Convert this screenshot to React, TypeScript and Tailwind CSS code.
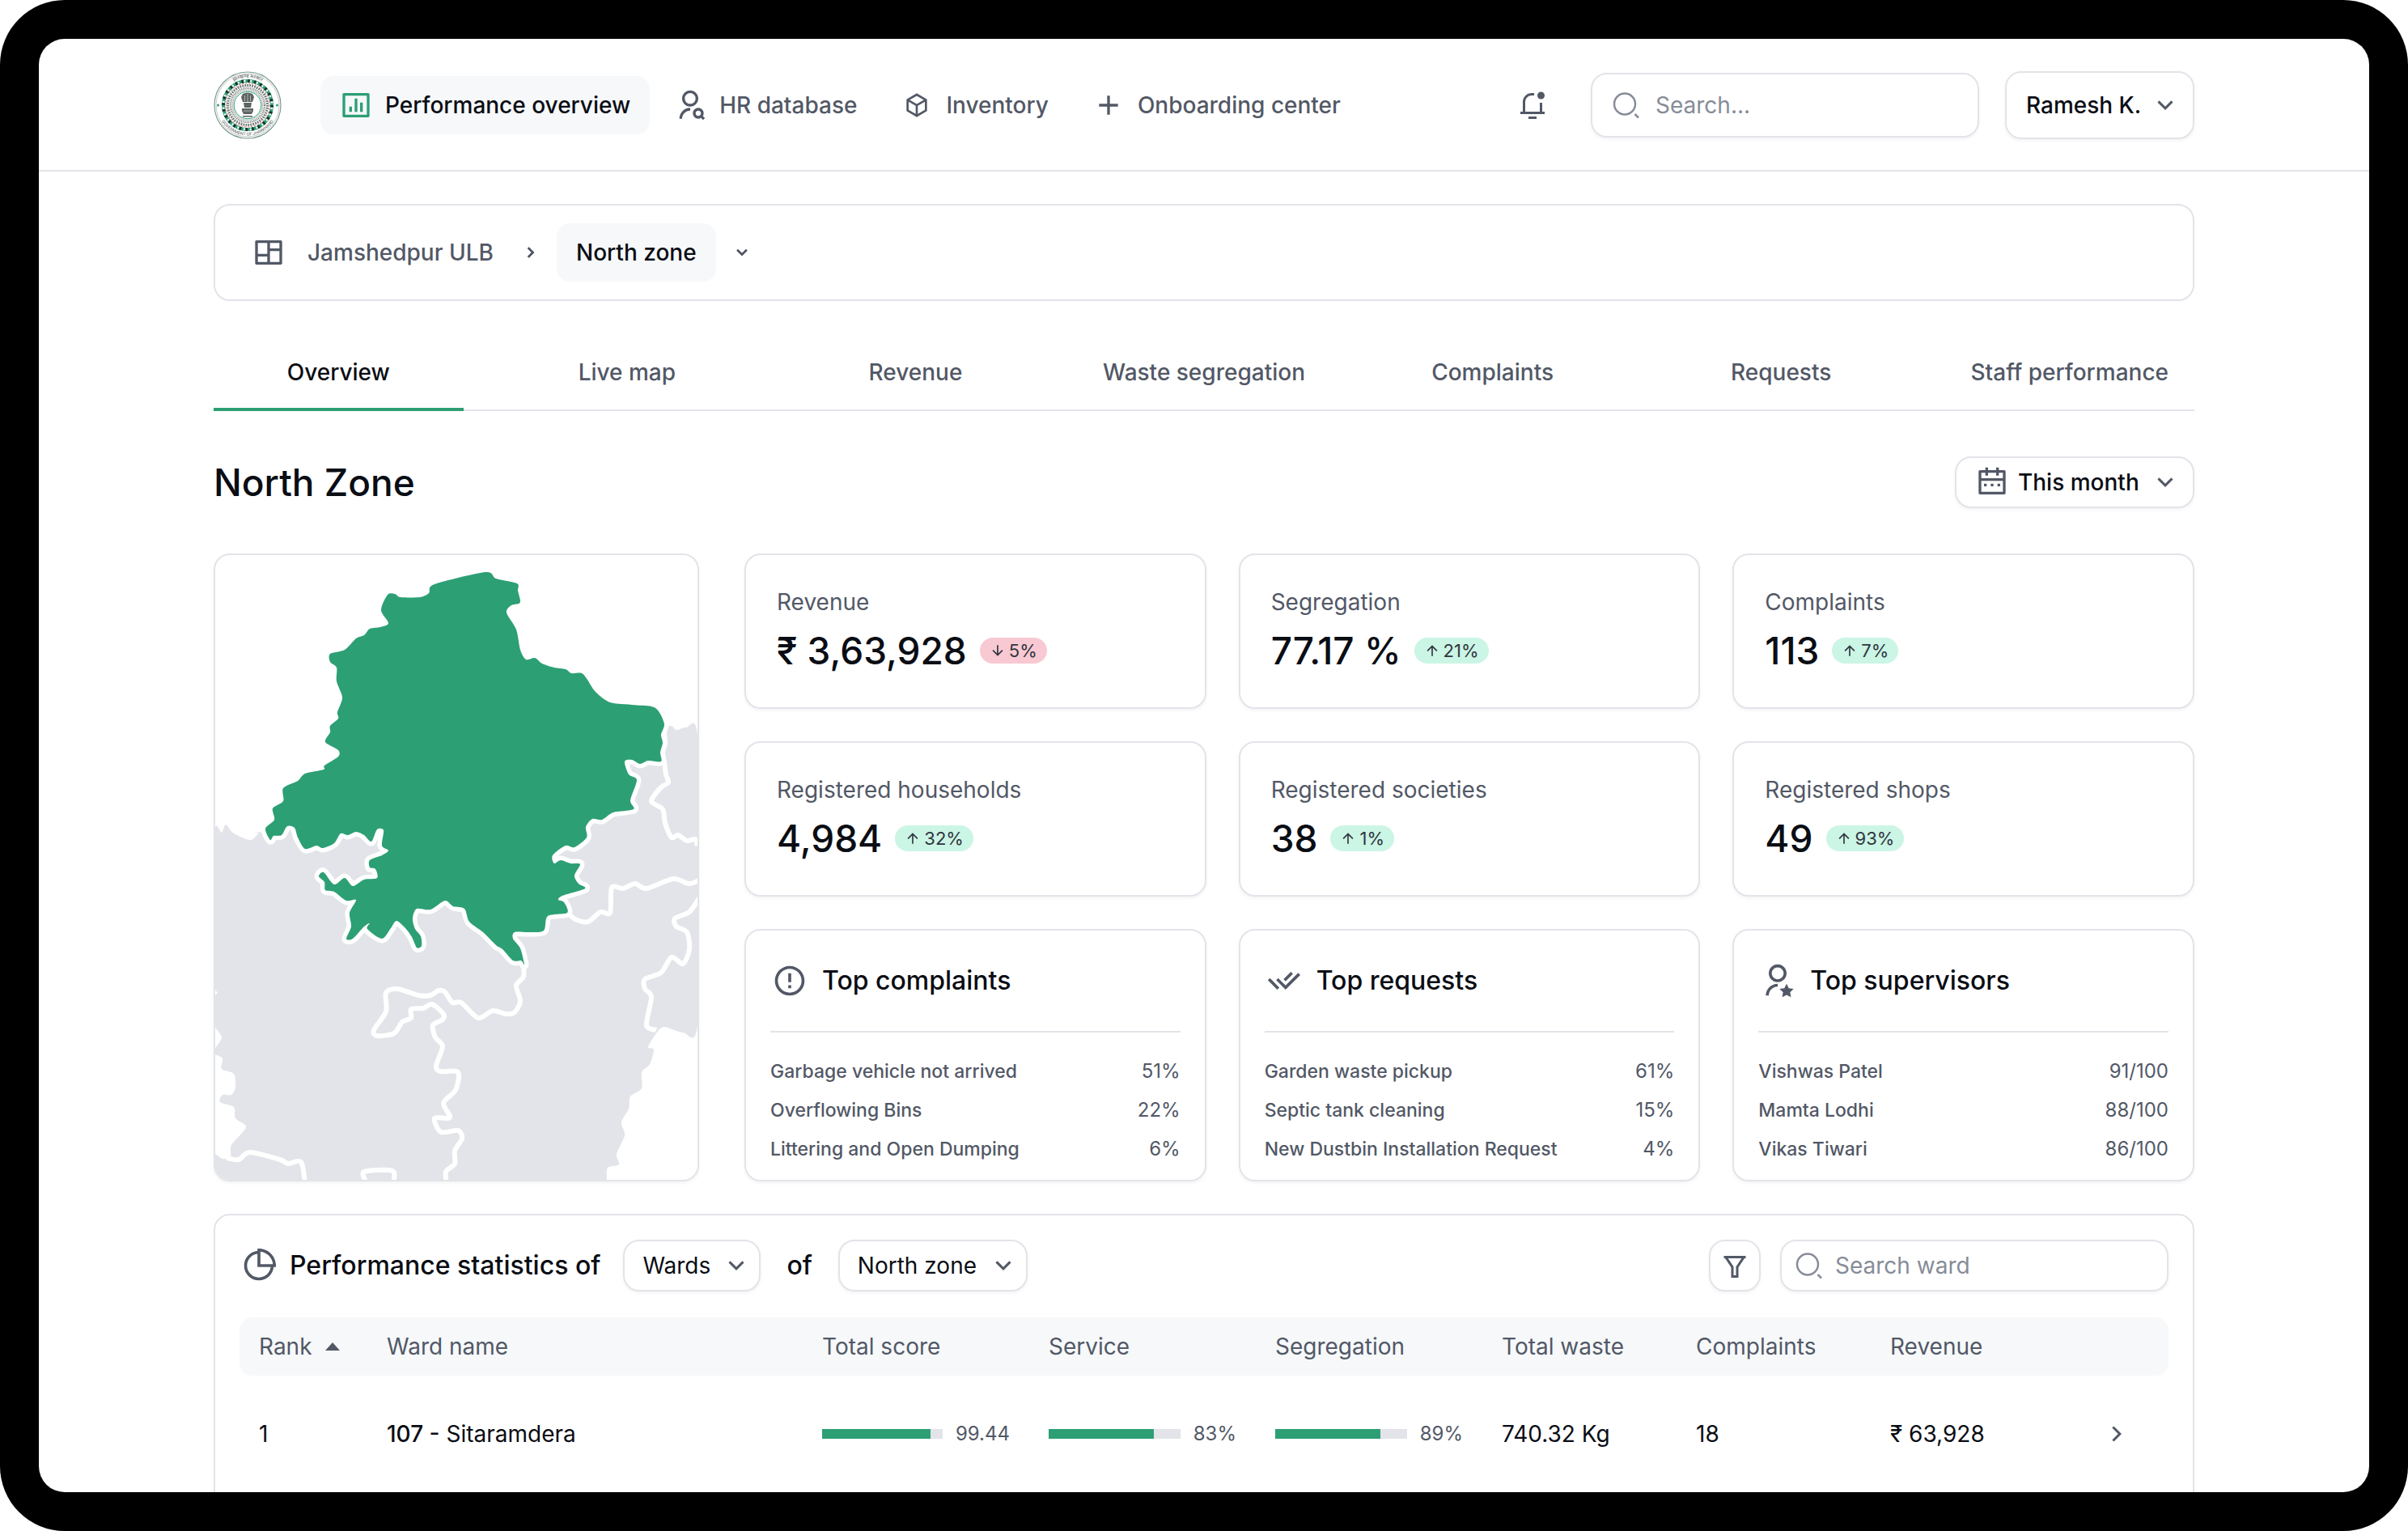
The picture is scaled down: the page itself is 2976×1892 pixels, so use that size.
import React from "react";
import {
  RiAddLine,
  RiArrowDownLine,
  RiArrowDownSLine,
  RiArrowRightSLine,
  RiArrowUpLine,
  RiBarChartBoxLine,
  RiBox3Line,
  RiCalendar2Line,
  RiCheckDoubleLine,
  RiErrorWarningLine,
  RiFilterLine,
  RiLayoutMasonryLine,
  RiPieChart2Line,
  RiUserSearchLine,
  RiUserStarLine,
} from "react-icons/ri";

type Point = [number, number];

const navItems = [
  { label: "Performance overview", icon: <RiBarChartBoxLine className="size-10 text-[#2d9f75]" />, active: true },
  { label: "HR database", icon: <RiUserSearchLine className="size-10" /> },
  { label: "Inventory", icon: <RiBox3Line className="size-10 p-1" /> },
  { label: "Onboarding center", icon: <RiAddLine className="size-10" /> },
];

const tabs = [
  "Overview",
  "Live map",
  "Revenue",
  "Waste segregation",
  "Complaints",
  "Requests",
  "Staff performance",
];

const stats = [
  { label: "Revenue", value: "₹ 3,63,928", change: "5%", down: true },
  { label: "Segregation", value: "77.17 %", change: "21%" },
  { label: "Complaints", value: "113", change: "7%" },
  { label: "Registered households", value: "4,984", change: "32%" },
  { label: "Registered societies", value: "38", change: "1%" },
  { label: "Registered shops", value: "49", change: "93%" },
];

const topLists = [
  {
    title: "Top complaints",
    icon: <RiErrorWarningLine className="size-11" />,
    rows: [
      ["Garbage vehicle not arrived", "51%"],
      ["Overflowing Bins", "22%"],
      ["Littering and Open Dumping", "6%"],
    ],
  },
  {
    title: "Top requests",
    icon: <RiCheckDoubleLine className="size-11" />,
    rows: [
      ["Garden waste pickup", "61%"],
      ["Septic tank cleaning", "15%"],
      ["New Dustbin Installation Request", "4%"],
    ],
  },
  {
    title: "Top supervisors",
    icon: <RiUserStarLine className="size-11" />,
    rows: [
      ["Vishwas Patel", "91/100"],
      ["Mamta Lodhi", "88/100"],
      ["Vikas Tiwari", "86/100"],
    ],
  },
];

const wards = [
  {
    rank: 1,
    code: "107 -",
    name: "Sitaramdera",
    score: { fill: 90, text: "99.44" },
    service: { fill: 80, text: "83%" },
    segregation: { fill: 80, text: "89%" },
    waste: "740.32 Kg",
    complaints: "18",
    revenue: "₹ 63,928",
  },
];

const northZone: Point[] = [
  [334, 21], [347, 29], [373, 35], [374, 44], [377, 56], [375, 60], [366, 62], [360, 71], [372, 92], [377, 117],
  [384, 129], [395, 127], [404, 134], [419, 139], [433, 141], [440, 146], [453, 146], [460, 154], [470, 169],
  [488, 182], [515, 185], [539, 187], [548, 193], [555, 209], [551, 222], [553, 232], [550, 244], [551, 255],
  [535, 254], [525, 258], [515, 253], [506, 255], [511, 271], [521, 278], [513, 303], [517, 314], [492, 318],
  [478, 327], [466, 326], [458, 336], [459, 349], [444, 361], [433, 359], [417, 371], [419, 381], [427, 377],
  [439, 381], [451, 382], [444, 396], [449, 406], [457, 412], [429, 421], [424, 426], [431, 429], [435, 442],
  [411, 446], [406, 464], [388, 466], [370, 466], [368, 474], [377, 486], [382, 506], [378, 501], [368, 501],
  [355, 487], [347, 482], [331, 466], [314, 453], [308, 437], [294, 434], [284, 427], [266, 438], [249, 437],
  [244, 449], [247, 462], [254, 471], [255, 483], [249, 485], [243, 472], [235, 461], [224, 452], [217, 461],
  [206, 474], [188, 462], [191, 455], [184, 459], [170, 474], [162, 474], [168, 459], [166, 442], [174, 426],
  [162, 427], [147, 416], [136, 414], [135, 404], [128, 397], [134, 392], [147, 407], [160, 399], [170, 409],
  [184, 401], [200, 399], [198, 388], [191, 386], [191, 377], [206, 371], [214, 365], [206, 359], [208, 340],
  [200, 339], [193, 354], [184, 346], [174, 342], [164, 346], [155, 344], [147, 356], [133, 362], [125, 359],
  [111, 363], [102, 349], [98, 337], [89, 335], [82, 346], [72, 347], [68, 352], [62, 338], [73, 327],
  [71, 313], [84, 304], [84, 288], [102, 279], [111, 270], [134, 265], [135, 260], [152, 249], [152, 241],
  [136, 231], [142, 219], [142, 211], [152, 202], [151, 194], [157, 176], [150, 156], [150, 139], [142, 132],
  [142, 122], [160, 117], [174, 103], [184, 99], [191, 91], [204, 89], [214, 84], [205, 68], [213, 49],
  [222, 48], [229, 52], [253, 52], [264, 47], [271, 36],
];

// everything below the north zone, as one land mass
const otherZones: Point[] = [
  [0, 337], [8, 343], [13, 333], [23, 344], [44, 352], [55, 342], [62, 341], [250, 300], [500, 240], [557, 212],
  [570, 216], [582, 213], [596, 222], [602, 400], [596, 582], [578, 590], [555, 583], [545, 591], [535, 608],
  [542, 611], [537, 629], [527, 639], [527, 659], [513, 669], [511, 684], [502, 701], [506, 717], [496, 740],
  [499, 753], [485, 757], [484, 772], [484, 780], [-6, 780], [-6, 739], [9, 746], [19, 744], [20, 729],
  [38, 707], [25, 696], [23, 682], [6, 676], [9, 667], [20, 667], [25, 657], [23, 641], [8, 635], [9, 622],
  [0, 617], [-4, 613], [0, 609], [8, 596], [0, 583], [-4, 565], [0, 545], [3, 540], [0, 536], [-6, 500],
  [-6, 400],
];

const boundaries: Point[][] = [
  [
    [553, 209], [555, 222], [556, 232], [553, 244], [555, 256], [557, 271], [560, 281], [551, 287], [539, 304],
    [553, 314], [556, 331], [564, 349], [572, 346], [583, 353], [593, 351], [596, 359],
  ],
  [
    [598, 402], [585, 406], [566, 400], [533, 412], [519, 406], [504, 412], [490, 411], [488, 442], [476, 441],
    [461, 453], [445, 450], [436, 442],
  ],
  [
    [598, 424], [586, 441], [568, 449], [570, 459], [583, 466], [586, 487], [578, 505], [564, 497], [551, 516],
    [531, 524], [531, 536], [539, 546], [533, 581], [545, 587],
  ],
  [
    [381, 507], [381, 521], [372, 532], [377, 551], [370, 565], [359, 567], [343, 563], [325, 572], [304, 553],
    [293, 553], [284, 540], [276, 538], [266, 544], [251, 544], [225, 536], [211, 541], [211, 564], [196, 587],
    [200, 594], [221, 591], [231, 577], [242, 572], [242, 561], [257, 560], [268, 555], [282, 567], [281, 574],
    [269, 581], [272, 596], [281, 607], [273, 631], [278, 638], [300, 639], [297, 661], [282, 677], [290, 695],
    [271, 696], [279, 713], [300, 711], [305, 721], [296, 736], [296, 752], [285, 762], [286, 776],
  ],
  [[14, 745], [29, 747], [43, 738], [80, 747], [90, 752], [106, 750], [111, 776]],
  [[187, 776], [184, 762], [219, 761], [220, 776]],
];

// Catmull-Rom through the points, so the borders look drawn and not jagged
function smooth(points: Point[], closed = false) {
  const n = points.length;
  const at = (i: number) => (closed ? points[(i + n) % n] : points[Math.max(0, Math.min(n - 1, i))]);
  let d = `M${points[0][0]} ${points[0][1]}`;
  for (let i = 0; i < (closed ? n : n - 1); i++) {
    const [p0, p1, p2, p3] = [at(i - 1), at(i), at(i + 1), at(i + 2)];
    const c1 = [p1[0] + (p2[0] - p0[0]) / 7, p1[1] + (p2[1] - p0[1]) / 7];
    const c2 = [p2[0] - (p3[0] - p1[0]) / 7, p2[1] - (p3[1] - p1[1]) / 7];
    d += `C${c1[0]} ${c1[1]} ${c2[0]} ${c2[1]} ${p2[0]} ${p2[1]}`;
  }
  return closed ? d + "Z" : d;
}

function ZoneMap() {
  const zone = smooth(northZone, true);
  return (
    <svg viewBox="0 0 596 772" className="w-full h-full" role="img" aria-label="Map of North zone">
      <path d={smooth(otherZones, true)} fill="#e2e4e9" />
      <g fill="none" stroke="#fff" strokeWidth="6" strokeLinejoin="round">
        {boundaries.map((line, i) => (
          <path key={i} d={smooth(line)} />
        ))}
        <path d={zone} strokeWidth="11" />
      </g>
      <path d={zone} fill="#2d9f75" />
    </svg>
  );
}

function Emblem() {
  return (
    <svg viewBox="0 0 84 84" className="size-[84px] shrink-0" role="img" aria-label="Government of Jharkhand">
      <defs>
        <path id="ring-top" d="M8 42a34 34 0 0 1 68 0" />
        <path id="ring-bottom" d="M4.500 42a37.500 37.500 0 0 0 75 0" />
      </defs>
      <g fill="none">
        <circle cx="42" cy="42" r="41" stroke="#7d9c90" strokeWidth="1.200" />
        <circle cx="42" cy="42" r="39" stroke="#b5bcb9" strokeWidth="0.800" />
        <circle cx="42" cy="42" r="30" stroke="#2d9f75" strokeWidth="4" />
        <circle cx="42" cy="42" r="30" stroke="#1d2f29" strokeWidth="4" strokeDasharray="2.500 5.354" />
        <circle cx="42" cy="42" r="30" stroke="#fff" strokeWidth="2.500" strokeDasharray="2 5.854" strokeDashoffset="-3" />
        <circle cx="42" cy="42" r="27" stroke="#d98a90" strokeWidth="1.200" strokeDasharray="2 2" />
        <circle cx="42" cy="42" r="24.500" stroke="#6f7775" strokeWidth="3" strokeDasharray="1.800 1.200" />
        <circle cx="42" cy="42" r="21" stroke="#848b89" strokeWidth="2.500" strokeDasharray="1.200 1" />
        <circle cx="42" cy="42" r="18.500" stroke="#9aa19f" strokeWidth="1.500" strokeDasharray="1 0.800" />
        <circle cx="42" cy="42" r="16.800" stroke="#2d9f75" strokeWidth="1" />
      </g>
      <g fill="#5d6462">
        <path d="M36 28q6-3 12 0l2 4-2 6H36l-2-6zM37 39h10l-1 6h-8zM35 46h14v3l-2 4H37l-2-4z" />
        <path d="M36 55h12v1.500H36z" />
        <path d="M42 28v10M38.500 30v7M45.500 30v7M37 49h10" stroke="#c9cdcb" strokeWidth="0.800" />
        <circle cx="5.500" cy="42" r="1.500" fill="#2d9f75" />
        <circle cx="78.500" cy="42" r="1.500" fill="#2d9f75" />
      </g>
      <g fontSize="6" fontFamily="Inter, sans-serif" fill="#4d5452" textAnchor="middle">
        <text fontFamily="'Noto Sans', sans-serif">
          <textPath href="#ring-top" startOffset="50%">झारखण्ड सरकार</textPath>
        </text>
        <text fontSize="5">
          <textPath href="#ring-bottom" startOffset="50%">GOVERNMENT OF JHARKHAND</textPath>
        </text>
      </g>
    </svg>
  );
}

function BellIcon() {
  return (
    <svg viewBox="0 0 40 40" className="size-10" fill="none" stroke="currentColor" strokeWidth="3">
      <path d="M22 6.500h-3a9.500 9.500 0 0 0-9.500 9.500v13M30.500 17v12M5 29.500h30M15 35.500h10" />
      <circle cx="30.500" cy="8" r="4.500" fill="currentColor" stroke="none" />
    </svg>
  );
}

function SearchIcon() {
  return (
    <svg viewBox="0 0 40 40" className="size-10 shrink-0 text-[#868c98]" fill="none" stroke="currentColor" strokeWidth="2.500">
      <circle cx="18" cy="18.500" r="13" />
      <path d="M30.500 31l4.500 4.500" />
    </svg>
  );
}

function SearchBox({ placeholder, className }: { placeholder: string; className: string }) {
  return (
    <label
      className={`flex items-center w-120 border-2 border-[#e2e4e9] rounded-[20px] bg-white shadow-[0_2px_4px_rgba(27,28,29,0.05)] ${className}`}
    >
      <SearchIcon />
      <input
        type="text"
        aria-label={placeholder}
        placeholder={placeholder}
        className="flex-1 min-w-0 placeholder:text-[#868c98] focus:outline-none"
      />
    </label>
  );
}

function Dropdown({
  label,
  value,
  icon,
  className = "",
}: {
  label: string;
  value: string;
  icon?: React.ReactNode;
  className?: string;
}) {
  return (
    <label
      className={`flex items-center h-16 border-2 border-[#e2e4e9] rounded-[20px] bg-white shadow-[0_2px_4px_rgba(27,28,29,0.05)] ${className}`}
    >
      {icon}
      <select aria-label={label} defaultValue={value} className="appearance-none focus:outline-none">
        <option>{value}</option>
      </select>
      <RiArrowDownSLine className="size-9 ml-3.5 text-[#525866]" />
    </label>
  );
}

function Header() {
  return (
    <header className="flex items-center h-[164px] px-[216px] pt-0.5 border-b-2 border-[#e2e4e9]">
      <Emblem />
      <nav className="flex flex-1 gap-1.5 ml-12">
        {navItems.map((item) => (
          <a
            key={item.label}
            href="#"
            className={`flex items-center gap-4 h-18 px-6 rounded-2xl font-medium whitespace-nowrap ${
              item.active ? "bg-[#f6f8fa] text-[#0a0d14]" : "text-[#525866]"
            }`}
          >
            {item.icon}
            {item.label}
          </a>
        ))}
      </nav>
      <button type="button" aria-label="Notifications" className="mr-13 text-[#525866]">
        <BellIcon />
      </button>
      <SearchBox placeholder="Search..." className="gap-4 h-20 px-[22px]" />
      <button
        type="button"
        className="flex items-center justify-between w-[234px] h-[84px] ml-8 pl-6 pr-4 border-2 border-[#e2e4e9] rounded-[20px] font-medium shadow-[0_2px_4px_rgba(27,28,29,0.05)]"
      >
        Ramesh K.
        <RiArrowDownSLine className="size-9 text-[#525866]" />
      </button>
    </header>
  );
}

function Breadcrumb() {
  return (
    <nav
      aria-label="Breadcrumb"
      className="flex items-center h-30 mt-10 pl-[46px] border-2 border-[#e2e4e9] rounded-[20px] font-medium text-[#525866]"
    >
      <RiLayoutMasonryLine className="size-10" />
      <a href="#" className="ml-7">
        Jamshedpur ULB
      </a>
      <RiArrowRightSLine className="size-6 ml-8.5 mr-5 stroke-1" />
      <a href="#" className="flex items-center h-18 px-6 rounded-2xl bg-[#f6f8fa] text-[#0a0d14]">
        North zone
      </a>
      <button type="button" aria-label="Switch zone" className="ml-5">
        <RiArrowDownSLine className="size-6 stroke-1" />
      </button>
    </nav>
  );
}

function Tabs() {
  return (
    <div role="tablist" className="flex gap-12 mt-10 border-b-2 border-[#e2e4e9]">
      {tabs.map((tab, i) => (
        <button
          key={tab}
          type="button"
          role="tab"
          aria-selected={i === 0}
          className={`flex-1 h-24 pt-1 -mb-0.5 border-b-4 font-medium whitespace-nowrap ${
            i === 0 ? "border-[#2d9f75] text-[#0a0d14]" : "border-transparent text-[#525866]"
          }`}
        >
          {tab}
        </button>
      ))}
    </div>
  );
}

function StatCard({ label, value, change, down }: (typeof stats)[number]) {
  return (
    <div className="p-[38px] border-2 border-[#e2e4e9] rounded-[20px] shadow-[0_2px_4px_rgba(27,28,29,0.05)]">
      <p className="leading-10 text-[#525866]">{label}</p>
      <div className="flex items-center gap-4 mt-2">
        <p className="text-[46px] leading-16 font-medium whitespace-nowrap">{value}</p>
        <span
          className={`flex items-center gap-1 h-8 px-3 rounded-full text-[22px] text-[#31353f] ${
            down ? "bg-[#f8c9d2]" : "bg-[#cbf5e5]"
          }`}
        >
          {down ? <RiArrowDownLine className="size-5" /> : <RiArrowUpLine className="size-5" />}
          {change}
        </span>
      </div>
    </div>
  );
}

function TopList({ title, icon, rows }: (typeof topLists)[number]) {
  return (
    <div className="px-[30px] pb-[18px] border-2 border-[#e2e4e9] rounded-[20px] shadow-[0_2px_4px_rgba(27,28,29,0.05)]">
      <div className="flex items-center gap-4.5 h-[126px] pl-0.5 border-b-2 border-[#e2e4e9] text-[#525866]">
        {icon}
        <h2 className="text-[32px] font-medium text-[#0a0d14]">{title}</h2>
      </div>
      <ul className="flex flex-col gap-2 mt-7 text-2xl text-[#525866]">
        {rows.map(([name, amount]) => (
          <li key={name} className="flex justify-between leading-10">
            <span className="text-[23px] font-medium">{name}</span>
            <span>{amount}</span>
          </li>
        ))}
      </ul>
    </div>
  );
}

function Meter({ fill, text }: { fill: number; text: string }) {
  return (
    <div className="flex items-center gap-4 mr-12 text-2xl text-[#525866]">
      <div className="flex-1 h-3 bg-[#e2e4e9]">
        <div className="h-full bg-[#2d9f75]" style={{ width: `${fill}%` }} />
      </div>
      {text}
    </div>
  );
}

function WardTable() {
  return (
    <section className="mt-10 px-[30px] pt-[30px] pb-8 border-2 border-[#e2e4e9] rounded-[20px]">
      <div className="flex items-center">
        <RiPieChart2Line className="size-11 ml-0.5 text-[#525866]" />
        <h2 className="ml-4 mr-7 text-[32px] font-medium whitespace-nowrap">Performance statistics of</h2>
        <Dropdown label="Area type" value="Wards" className="pl-[22px] pr-2.5" />
        <span className="mx-8 text-[32px] font-medium">of</span>
        <Dropdown label="Zone" value="North zone" className="pl-[22px] pr-2.5" />
        <button
          type="button"
          aria-label="Filter"
          className="flex items-center justify-center size-16 ml-auto mr-6 border-2 border-[#e2e4e9] rounded-[20px] text-[#525866] shadow-[0_2px_4px_rgba(27,28,29,0.05)]"
        >
          <RiFilterLine className="size-9" />
        </button>
        <SearchBox placeholder="Search ward" className="gap-3 h-16 px-3.5" />
      </div>
      <table className="w-full mt-8 table-fixed text-left">
        <colgroup>
          <col className="w-[182px]" />
          <col />
          <col className="w-[280px]" />
          <col className="w-[280px]" />
          <col className="w-[280px]" />
          <col className="w-[240px]" />
          <col className="w-[240px]" />
          <col className="w-[240px]" />
          <col className="w-[104px]" />
        </colgroup>
        <thead>
          <tr className="h-18 bg-[#f6f8fa] text-[#525866] *:font-normal">
            <th className="pl-6 rounded-l-2xl">
              <span className="flex items-center gap-4">
                Rank
                <svg viewBox="0 0 18 10" className="w-[18px] h-2.5" fill="currentColor">
                  <path d="M9 0l9 10H0z" />
                </svg>
              </span>
            </th>
            <th>Ward name</th>
            <th>Total score</th>
            <th>Service</th>
            <th>Segregation</th>
            <th>Total waste</th>
            <th>Complaints</th>
            <th>Revenue</th>
            <th className="rounded-r-2xl" aria-label="Open" />
          </tr>
        </thead>
        <tbody>
          {wards.map((ward) => (
            <tr key={ward.rank} className="h-36">
              <td className="pl-6">{ward.rank}</td>
              <td>
                <span className="font-medium">{ward.code}</span> {ward.name}
              </td>
              <td>
                <Meter {...ward.score} />
              </td>
              <td>
                <Meter {...ward.service} />
              </td>
              <td>
                <Meter {...ward.segregation} />
              </td>
              <td>{ward.waste}</td>
              <td>{ward.complaints}</td>
              <td>{ward.revenue}</td>
              <td>
                <button type="button" aria-label={`Open ${ward.name}`} className="block ml-5.5 text-[#525866]">
                  <RiArrowRightSLine className="size-9" />
                </button>
              </td>
            </tr>
          ))}
        </tbody>
      </table>
    </section>
  );
}

function App() {
  return (
    <div className="h-screen p-12 bg-black rounded-[80px] font-[Inter,sans-serif] text-[28px] leading-10 text-[#0a0d14]">
      <div className="h-full overflow-hidden bg-white rounded-[32px]">
        <Header />
        <main className="px-[216px]">
          <Breadcrumb />
          <Tabs />
          <div className="flex items-center justify-between h-16 mt-14">
            <h1 className="text-[46px] leading-16 font-medium">North Zone</h1>
            <Dropdown
              label="Period"
              value="This month"
              className="pl-6 pr-4 font-medium"
              icon={<RiCalendar2Line className="size-10 mr-3 text-[#525866]" />}
            />
          </div>
          <div className="flex gap-14 mt-14">
            <div className="w-[600px] shrink-0 overflow-hidden border-2 border-[#e2e4e9] rounded-[20px] shadow-[0_2px_4px_rgba(27,28,29,0.05)]">
              <ZoneMap />
            </div>
            <div className="grid flex-1 grid-cols-3 gap-10">
              {stats.map((stat) => (
                <StatCard key={stat.label} {...stat} />
              ))}
              {topLists.map((list) => (
                <TopList key={list.title} {...list} />
              ))}
            </div>
          </div>
          <WardTable />
        </main>
      </div>
    </div>
  );
}

export default App;
